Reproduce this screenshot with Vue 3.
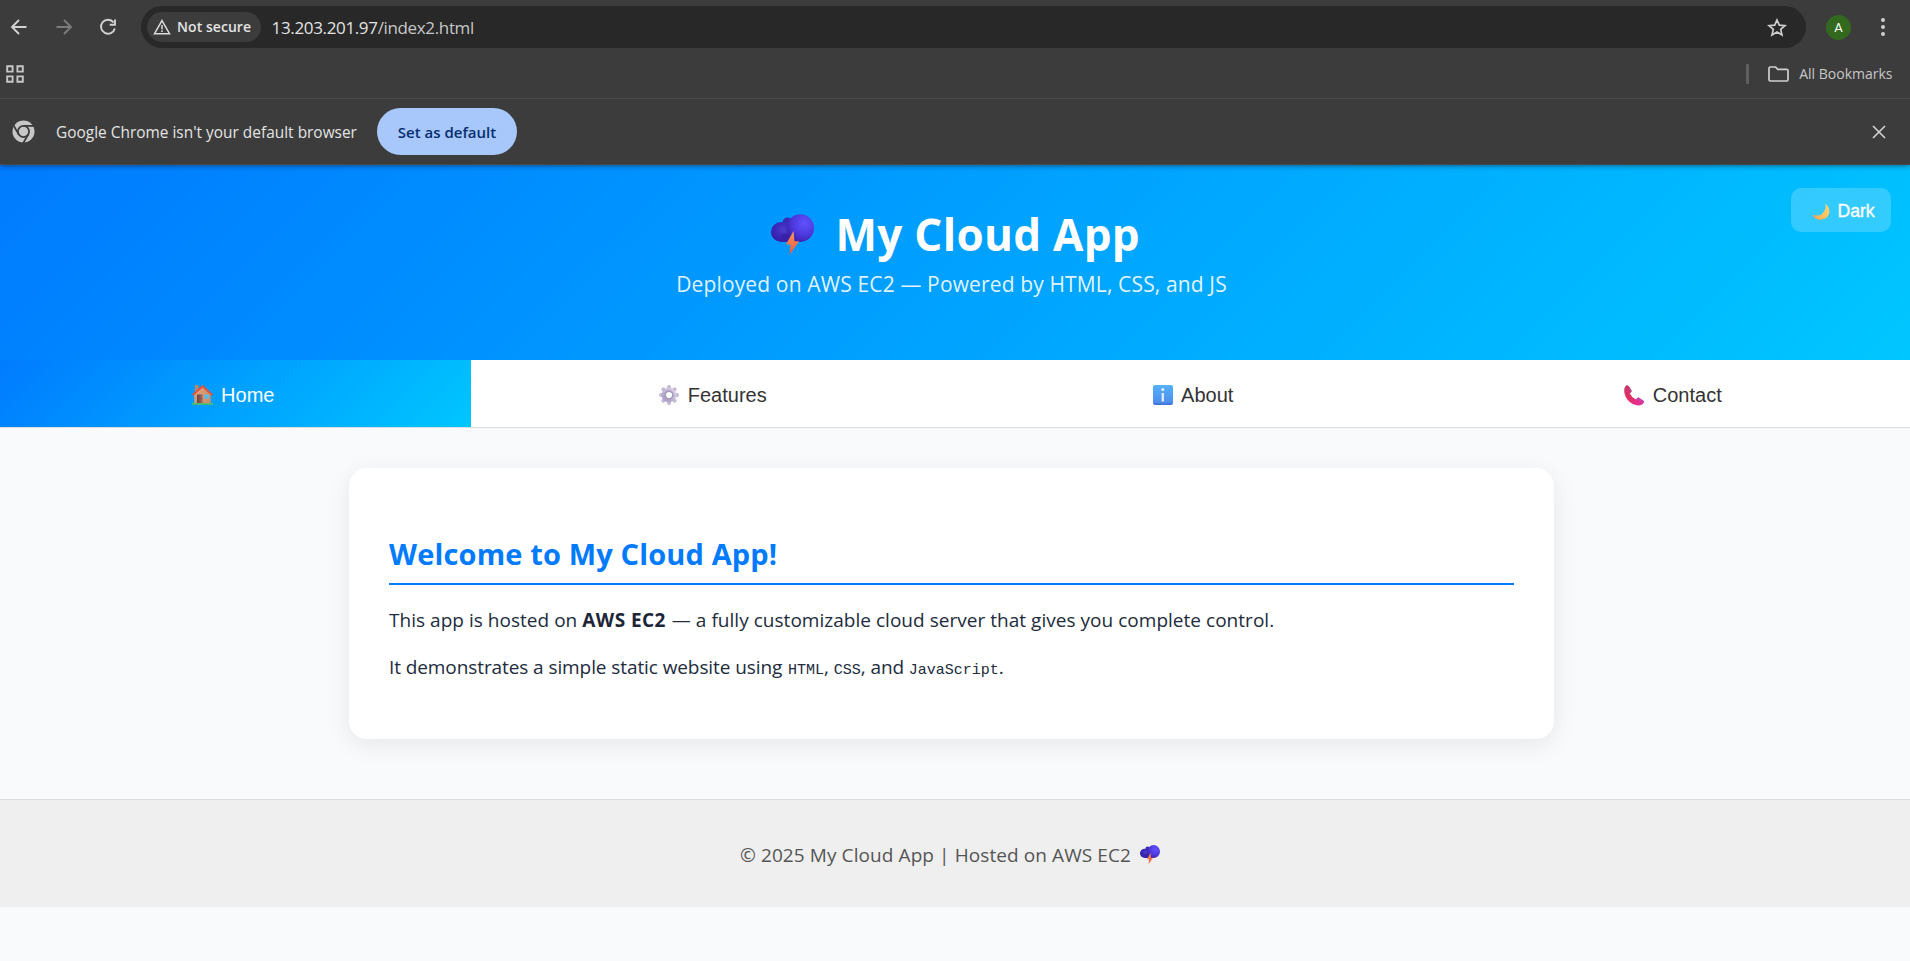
<script setup>
const tabs = [
  { id: 'home', label: 'Home' },
  { id: 'features', label: 'Features' },
  { id: 'about', label: 'About' },
  { id: 'contact', label: 'Contact' },
]
const petals = [0, 45, 90, 135, 180, 225, 270, 315]
</script>

<template>
  <div class="window">
    <svg class="defs" width="0" height="0" aria-hidden="true">
      <defs>
        <radialGradient id="puffL" cx=".6" cy=".38" r=".7">
          <stop offset="0" stop-color="#4a3cc8" /><stop offset=".6" stop-color="#3a26b8" /><stop offset="1" stop-color="#351b9c" />
        </radialGradient>
        <radialGradient id="puffR" cx=".65" cy=".32" r=".75">
          <stop offset="0" stop-color="#6152ff" /><stop offset=".6" stop-color="#4c38dc" /><stop offset="1" stop-color="#3a20a8" />
        </radialGradient>
        <linearGradient id="bolt" x1="0" y1="0" x2="0" y2="1">
          <stop offset="0" stop-color="#f79a58" /><stop offset="1" stop-color="#fb5240" />
        </linearGradient>
        <linearGradient id="wall" x1="0" y1="0" x2="1" y2="1">
          <stop offset="0" stop-color="#e0a57c" /><stop offset="1" stop-color="#c98d66" />
        </linearGradient>
        <linearGradient id="door" x1="0" y1="0" x2="1" y2="0">
          <stop offset="0" stop-color="#6d4448" /><stop offset="1" stop-color="#9a6a5e" />
        </linearGradient>
        <linearGradient id="gear" x1="1" y1="0" x2="0" y2="1">
          <stop offset="0" stop-color="#d8cfe6" /><stop offset="1" stop-color="#ac9cc4" />
        </linearGradient>
        <linearGradient id="info" x1="0" y1="0" x2="0" y2="1">
          <stop offset="0" stop-color="#55b2fb" /><stop offset=".85" stop-color="#4e90ee" /><stop offset="1" stop-color="#3c6cd2" />
        </linearGradient>
        <linearGradient id="phone" x1="0" y1="0" x2="1" y2="1">
          <stop offset="0" stop-color="#c43a6c" /><stop offset=".4" stop-color="#e62d60" /><stop offset="1" stop-color="#df32a6" />
        </linearGradient>
        <linearGradient id="moon" x1="1" y1="0" x2="0" y2="1">
          <stop offset="0" stop-color="#ffd873" /><stop offset=".6" stop-color="#fdbf5c" /><stop offset="1" stop-color="#ee9656" />
        </linearGradient>
        <symbol id="storm" viewBox="0 0 130 123">
          <circle cx="50" cy="25" r="15" fill="#3c2bb4" />
          <ellipse cx="31" cy="54" rx="31" ry="30" fill="url(#puffL)" />
          <path d="M31 60h60v24H31z" fill="#3821a8" />
          <ellipse cx="89" cy="42" rx="41" ry="42" fill="url(#puffR)" />
          <path d="M68 51 45 92h14l-3 31 29-41H71z" fill="url(#bolt)" />
        </symbol>
      </defs>
    </svg>

    <div class="browser">
      <div class="toolbar">
        <svg class="nav-ic" viewBox="0 0 18 18"><path d="M16.5 9H2M9 2 2 9l7 7" /></svg>
        <svg class="nav-ic dim" viewBox="0 0 18 18"><path d="M1.500 9H16M9 2l7 7-7 7" /></svg>
        <svg class="nav-ic" viewBox="0 0 18 18"><path d="M14.600 4.500A7 7 0 1 0 15.800 10.500M16 1.500v5.300h-5.300" /></svg>
        <div class="omnibox">
          <span class="chip">
            <svg width="18" height="16" viewBox="0 0 18 16"><path d="M9 1.600 16.500 14.700H1.500z" fill="none" stroke="#dcdcdc" stroke-width="1.500" /><path d="M9 6v4.300M9 11.300v1.700" stroke="#dcdcdc" stroke-width="1.500" /></svg>
            <b>Not secure</b>
          </span>
          <span class="url">13.203.201.97<i>/index2.html</i></span>
          <svg class="star" width="20" height="19" viewBox="0 0 20 19"><path d="M10 2l2.300 5.200 5.700.5-4.300 3.700 1.300 5.500-5-2.900-5 2.900 1.300-5.500L2 7.700l5.700-.5z" fill="none" stroke="#cfcfcf" stroke-width="1.700" /></svg>
        </div>
        <span class="avatar">A</span>
        <svg class="dots" width="6" height="20" viewBox="0 0 6 20"><circle cx="3" cy="3" r="2" /><circle cx="3" cy="10" r="2" /><circle cx="3" cy="17" r="2" /></svg>
      </div>
      <div class="bookmarks">
        <svg width="18" height="18" viewBox="0 0 18 18" fill="none" stroke="#c7c7c7" stroke-width="1.900"><path d="M1.200 1.200h5.400v5.400H1.200zM11.400 1.200h5.400v5.400h-5.400zM1.200 11.400h5.400v5.400H1.200zM11.400 11.400h5.400v5.400h-5.400z" /></svg>
        <span class="bar"></span>
        <svg class="folder" width="21" height="16" viewBox="0 0 21 16"><path d="M1 13.700V2.300Q1 1 2.300 1H7.500l2.200 2.300h9Q20 3.300 20 4.600v9.100q0 1.300-1.300 1.300H2.300Q1 15 1 13.700z" fill="none" stroke="#cfcfcf" stroke-width="1.700" /></svg>
        <span class="all">All Bookmarks</span>
      </div>
      <div class="infobar">
        <svg class="chrome" width="23" height="23" viewBox="-11.500 -11.500 23 23">
          <circle r="11" fill="#c7c7c7" />
          <g stroke="#3c3c3c" stroke-width="1.800" fill="none">
            <circle r="5.600" />
            <path v-for="a in [0, 120, 240]" :key="a" d="M0-5.600H12" :transform="`rotate(${a})`" />
          </g>
        </svg>
        <span class="msg">Google Chrome isn't your default browser</span>
        <button class="default">Set as default</button>
        <svg class="close" width="14" height="14" viewBox="0 0 14 14"><path d="M1 1l12 12M13 1 1 13" stroke="#cfcfcf" stroke-width="1.700" /></svg>
      </div>
    </div>

    <header class="hero">
      <h1><svg width="43" height="41"><use href="#storm" /></svg>My Cloud App</h1>
      <p>Deployed on AWS EC2 — Powered by HTML, CSS, and JS</p>
      <button class="theme">
        <svg width="18" height="17" viewBox="0 0 18 17"><path d="M13.500.5C19 5.500 18.600 12.500 13 15.600 8.500 18 2.500 16.600.5 11.800c3.500 1.100 7.800 1 10.400-1.900C13.500 7 14 4 13.500.5z" fill="url(#moon)" /></svg>
        <span>Dark</span>
      </button>
    </header>

    <nav class="tabs">
      <button v-for="t in tabs" :key="t.id" :class="['tab', t.id, { active: t.id === 'home' }]">
        <svg v-if="t.id === 'home'" width="21" height="20" viewBox="0 0 21 20">
          <path d="M3 0h3.500v7H3z" fill="#b9876c" />
          <path d="M2.300 9 10.500 2l8.200 7v9.500H2.300z" fill="url(#wall)" />
          <path d="M.8 10 10.500 1.300 20.200 10" fill="none" stroke="#e8503c" stroke-width="2" />
          <path d="M5 9.500h5.500v9H5z" fill="url(#door)" />
          <path d="M12.300 9.500h4.500v4.200h-4.500z" fill="#55bdf0" />
          <path d="M0 18h21v1.800H0z" fill="#4fbd6a" />
        </svg>
        <svg v-else-if="t.id === 'features'" width="20" height="20" viewBox="-10 -10 20 20">
          <g v-for="a in petals" :key="a" :transform="`rotate(${a})`">
            <rect x="-1.900" y="-9.900" width="3.800" height="6" rx="1.600" fill="#c6bad8" />
          </g>
          <circle r="5.200" fill="none" stroke="url(#gear)" stroke-width="4.200" />
          <circle r="3.900" fill="none" stroke="#a799ba" stroke-width="1.600" />
        </svg>
        <svg v-else-if="t.id === 'about'" width="20" height="20" viewBox="0 0 20 20">
          <rect width="20" height="20" rx="2" fill="url(#info)" />
          <circle cx="9.800" cy="4.600" r="1.500" fill="#e2eefc" /><path d="M9.800 8v8.500" stroke="#e2eefc" stroke-width="2.300" />
        </svg>
        <svg v-else width="20" height="21" viewBox="0 0 20 21">
          <path d="M2.400.4C3.200 0 4 .3 4.600 1.100L7.300 5q.8 1.300-.3 2.300L5.700 8.400q2.200 4.300 6.300 6.200l1.100-1.400q.9-1 2.100-.3l4 2.700q1.300 1 .5 2.200c-1.500 2.500-5 3.300-8.700 2C5 17.700.3 12 .2 5.400.2 3 .9 1.200 2.400.4z" fill="url(#phone)" />
          <path d="M3.200.5Q4 .4 4.600 1.100L7.300 5q.8 1.300-.3 2.300l-1 .9q-.8-4.200-2.800-7.700z" fill="#a94d93" opacity=".75" />
          <path d="M12 14.600l1.100-1.400q.9-1 2.100-.3l4 2.700q1.100.8.6 2-3.600-2.500-7.800-3z" fill="#b148ab" opacity=".75" />
        </svg>
        <span>{{ t.label }}</span>
      </button>
    </nav>

    <main>
      <section class="card">
        <h2>Welcome to My Cloud App!</h2>
        <p>This app is hosted on <strong>AWS EC2</strong> — a fully customizable cloud server that gives you complete control.</p>
        <p class="second">It demonstrates a simple static website using <code class="lead">HTML</code><span>, </span><code>CSS</code><span>, and </span><code>JavaScript</code><span>.</span></p>
      </section>
    </main>

    <footer>
      <span>© 2025 My Cloud App | Hosted on AWS EC2</span>
      <svg width="20" height="19"><use href="#storm" /></svg>
    </footer>
  </div>
</template>

<style>
body { background: #f9fafc; }
</style>

<style scoped>
.window {
  height: 961px;
  overflow: hidden;
  background: #f9fafc;
  font-family: "Open Sans", "Noto Sans", sans-serif;
  white-space: nowrap;
}
.defs { display: block; position: absolute; }
svg { flex: none; display: block; }
button { border: 0; padding: 0; margin: 0; }
h1, h2, p { margin: 0; }

/* browser chrome */
.browser {
  position: relative;
  z-index: 1;
  height: 165px;
  box-sizing: border-box;
  background: #3c3c3c;
  border-bottom: 1px solid #484848;
  box-shadow: 0 1px 5px rgba(0, 0, 0, .45);
}
.toolbar { display: flex; align-items: center; height: 54px; padding-left: 10px; }
.nav-ic { width: 18px; height: 18px; margin-right: 26.700px; fill: none; stroke: #d2d2d2; stroke-width: 1.900; }
.nav-ic.dim { stroke: #7c7c7c; }
.omnibox {
  display: flex;
  align-items: center;
  width: 1665px;
  height: 42px;
  margin-left: -3px;
  box-sizing: border-box;
  padding: 0 19px 0 6px;
  border-radius: 21px;
  background: #282828;
}
.chip {
  display: flex;
  align-items: center;
  gap: 6px;
  width: 114px;
  height: 30px;
  box-sizing: border-box;
  padding-left: 6px;
  border-radius: 15px;
  background: #3c3c3c;
  color: #e3e3e3;
}
.chip b { font-size: 14px; font-weight: 600; line-height: 20px; letter-spacing: .05px; }
.url { margin-left: 10.500px; padding-top: 2px; font-size: 17px; line-height: 24px; letter-spacing: -.35px; color: #e3e3e3; }
.url i { font-style: normal; color: #c7c7c7; }
.star { margin-left: auto; }
.avatar {
  width: 25px;
  height: 25px;
  margin-left: 20px;
  border-radius: 50%;
  background: #33691e;
  color: #fff;
  font: 13px/25px Roboto, sans-serif;
  text-align: center;
}
.dots { margin-left: 29px; fill: #cfcfcf; }
.bookmarks {
  display: flex;
  align-items: center;
  height: 45px;
  box-sizing: border-box;
  padding: 0 17.500px 5px 6px;
  border-bottom: 1px solid #4a4a4a;
}
.bar { width: 3px; height: 20px; margin-left: auto; border-radius: 1px; background: #5f5f5f; }
.folder { margin-left: 19px; }
.all { margin-left: 10px; font-size: 14px; line-height: 20px; color: #c7c7c7; }
.infobar { display: flex; align-items: center; height: 65px; padding: 0 24.500px 0 12px; }
.msg { margin-left: 21px; width: 321px; padding-top: 2px; font-size: 15.400px; line-height: 22px; letter-spacing: .02px; color: #e3e3e3; }
.default {
  width: 140px;
  height: 47px;
  border-radius: 23.500px;
  background: #a8c7fa;
  color: #062e6f;
  font: 600 15px/22px "Open Sans", sans-serif;
}
.close { margin-left: auto; }

/* hero */
.hero {
  position: relative;
  height: 195px;
  box-sizing: border-box;
  padding-top: 39px;
  background: linear-gradient(135deg, #007bff, #00c6ff);
  color: #fff;
}
.hero h1 {
  display: flex;
  align-items: center;
  justify-content: center;
  gap: 21.500px;
  height: 60px;
  padding-left: 1px;
  font-size: 44px;
  font-weight: 700;
  letter-spacing: .3px;
}
.hero p {
  padding-right: 7px;
  text-align: center;
  font-size: 21px;
  line-height: 41px;
  letter-spacing: .14px;
  color: rgba(255, 255, 255, .9);
}
.theme {
  position: absolute;
  top: 23px;
  right: 19px;
  display: flex;
  align-items: center;
  gap: 8px;
  width: 100px;
  height: 44px;
  padding: 2px 0 0 20.500px;
  border-radius: 10px;
  background: rgba(255, 255, 255, .2);
  color: #fff;
  font: 17.600px/20px "Liberation Sans", Arial, sans-serif;
  -webkit-text-stroke: .35px #fff;
}

/* tabs */
.tabs {
  display: grid;
  grid-template-columns: 471px 484px 476px 479px;
  height: 68px;
  box-sizing: border-box;
  border-bottom: 1px solid #ddd;
  background: #fff;
}
.tab {
  display: flex;
  align-items: center;
  justify-content: center;
  gap: 8.500px;
  padding-top: 3px;
  background: none;
  color: #333;
  font: 20px/24px "Liberation Sans", Arial, sans-serif;
}
.tab.home { padding-right: 5px; }
.tab.contact { padding-left: 5px; }
.tab.active { background: linear-gradient(135deg, #007bff, #00c6ff); color: #fff; }

/* content */
main { display: flex; justify-content: center; padding: 40px 7px 60px 0; }
.card {
  width: 1205px;
  height: 271px;
  box-sizing: border-box;
  padding: 66px 40px 0;
  border-radius: 18px;
  background: #fff;
  box-shadow: 0 6px 25px rgba(0, 0, 0, .08);
  color: #212b3c;
}
.card h2 {
  padding-bottom: 9px;
  border-bottom: 2px solid #007bff;
  color: #007bff;
  font-size: 29px;
  line-height: 40px;
  letter-spacing: .15px;
}
.card p { margin-top: 19px; font-size: 19px; line-height: 32px; letter-spacing: .03px; }
.card strong { margin-right: 1px; letter-spacing: .45px; color: #1c2638; }
.card p.second { margin-top: 15px; letter-spacing: -.09px; }
.second code { font: 15px/20px "Liberation Mono", monospace; letter-spacing: 0; }
.second code.lead { margin-left: 1px; }

footer {
  display: flex;
  align-items: center;
  justify-content: center;
  gap: 9px;
  height: 108px;
  box-sizing: border-box;
  padding: 2px 10px 0 0;
  border-top: 1px solid #d9dbde;
  background: #efefef;
  color: #555;
  font-size: 19px;
  letter-spacing: .09px;
}
</style>
